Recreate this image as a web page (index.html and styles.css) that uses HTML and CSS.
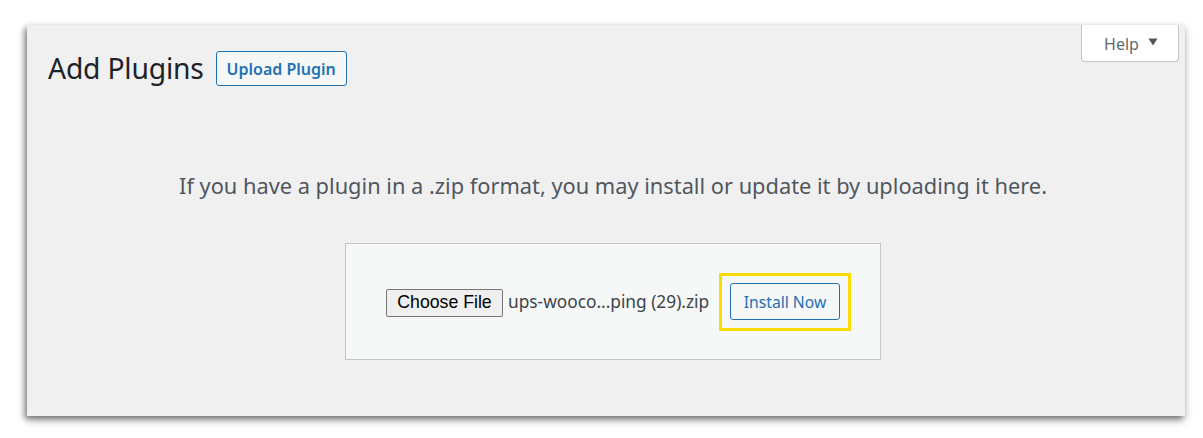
FILE: index.html
```html
<!DOCTYPE html>
<html lang="en">
<head>
<meta charset="utf-8">
<title>Add Plugins</title>
<link rel="stylesheet" href="styles.css">
</head>
<body>
<div class="panel">
  <div class="help-tab">Help <svg class="caret" width="10" height="8" viewBox="0 0 10 8"><polygon points="0.5,0.5 9.5,0.5 5,7.5" fill="#50575e"/></svg></div>
  <div class="header">
    <h1 class="title">Add Plugins</h1>
    <button class="upload-btn">Upload Plugin</button>
  </div>
  <p class="install-help">If you have a plugin in a .zip format, you may install or update it by uploading it here.</p>
  <div class="upload-form">
    <button class="choose-file">Choose File</button>
    <span class="file-name">ups-wooco...ping (29).zip</span>
    <button class="install-btn">Install Now</button>
  </div>
</div>
</body>
</html>
```

FILE: styles.css
```css
html, body {
  margin: 0;
  padding: 0;
  background: #ffffff;
}
body {
  font-family: "Noto Sans", "Open Sans", sans-serif;
  color: #3c434a;
  height: 438px;
}
.panel {
  position: relative;
  box-sizing: border-box;
  width: 1158px;
  height: 391px;
  margin: 25px 0 0 27px;
  background: #f0f0f1;
  box-shadow: -2px 3px 6px rgba(0, 0, 0, 0.5), 0 5px 10px rgba(0, 0, 0, 0.15);
  padding: 26px 7px 0 21px;
}
.help-tab {
  position: absolute;
  top: 0;
  right: 6px;
  box-sizing: border-box;
  width: 98px;
  height: 37px;
  background: #ffffff;
  border: 1px solid #c3c4c7;
  border-top: none;
  border-radius: 0 0 4px 4px;
  color: #646970;
  font-size: 16px;
  display: flex;
  align-items: center;
  justify-content: center;
  gap: 9px;
  padding: 1px 0 0 2px;
}
.caret {
  display: block;
  margin-top: -3px;
}
.header {
  display: flex;
  align-items: center;
  gap: 12px;
  height: 35px;
}
.title {
  margin: 0;
  font-size: 28.3px;
  font-weight: 400;
  color: #1d2327;
  line-height: 1;
  letter-spacing: -0.2px;
}
.upload-btn {
  box-sizing: border-box;
  height: 35px;
  width: 131px;
  padding: 0;
  font-family: inherit;
  font-size: 16px;
  font-weight: 600;
  color: #2271b1;
  background: #f6f7f7;
  border: 1px solid #2271b1;
  border-radius: 3px;
}
.install-help {
  margin: 86px 0 0 0;
  text-align: center;
  font-size: 21.8px;
  color: #50575e;
  line-height: 28px;
}
.upload-form {
  box-sizing: border-box;
  width: 536px;
  height: 117px;
  margin: 43px auto 0 auto;
  background: #f6f7f7;
  border: 1px solid #c3c4c7;
  padding: 0 40px;
  display: flex;
  align-items: center;
}
.choose-file {
  box-sizing: border-box;
  width: 117px;
  height: 28px;
  padding: 0;
  font-family: "Liberation Sans", Arial, sans-serif;
  font-size: 17.7px;
  color: #000000;
  background: #efefef;
  border: 1px solid #767676;
  border-radius: 2px;
  margin-top: 2px;
}
.file-name {
  margin-left: 5px;
  font-size: 17.3px;
  color: #3c434a;
  white-space: nowrap;
}
.install-btn {
  position: relative;
  box-sizing: border-box;
  margin-left: auto;
  width: 110px;
  height: 37px;
  padding: 0;
  font-family: inherit;
  font-size: 15.7px;
  color: #2271b1;
  background: #f6f7f7;
  border: 1px solid #2271b1;
  border-radius: 3px;
}
.install-btn::after {
  content: "";
  position: absolute;
  top: -11px;
  left: -12px;
  right: -12px;
  bottom: -12px;
  border: 3px solid #fcdc00;
}
```
